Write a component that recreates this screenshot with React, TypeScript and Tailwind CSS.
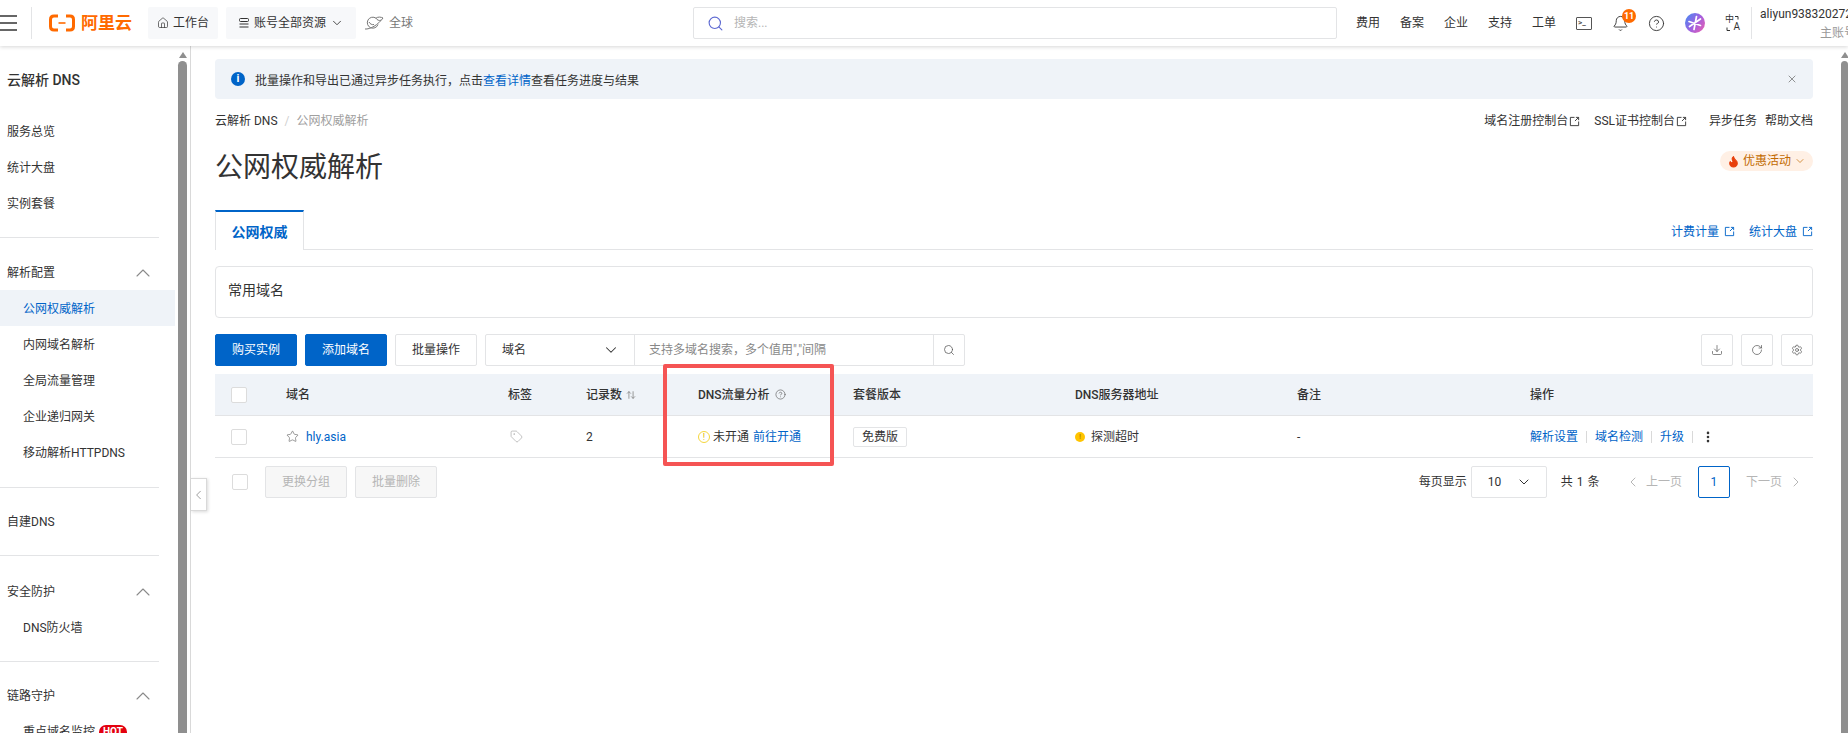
import {
  ChevronDown,
  ChevronLeft,
  ChevronRight,
  ChevronUp,
  CircleHelp,
  Download,
  Bell,
  Flame,
  House,
  Search,
  Settings,
  Star,
  Tag,
  X,
  RotateCw,
  EllipsisVertical,
  ArrowUpDown,
} from "lucide-react";

const font = "font-['Roboto','Noto_Sans_CJK_SC',sans-serif]";

function ExtIcon({ className = "" }: { className?: string }) {
  return (
    <svg viewBox="0 0 12 12" fill="none" stroke="currentColor" strokeWidth="1" className={`w-[11px] h-[11px] ${className}`}>
      <path d="M6 1.5H1.5v9h9V6" />
      <path d="M7.5 1.5h3v3M10.5 1.5 6.5 5.5" />
    </svg>
  );
}

function Logo() {
  return (
    <div className="flex items-center gap-[6px] text-[#ff6a00]">
      <svg viewBox="0 0 26 18" className="w-[26px] h-[18px]" fill="none" stroke="currentColor" strokeWidth="3">
        <path d="M9 2H5Q1.5 2 1.5 5.5v7Q1.5 16 5 16h4" />
        <path d="M17 2h4q3.500 0 3.500 3.500v7Q24.500 16 21 16h-4" />
        <path d="M9.500 9h7" strokeWidth="1.6" />
      </svg>
      <span className="text-[17px] font-bold leading-none">阿里云</span>
    </div>
  );
}

function SideRow({ label, sub, active, open, hot }: { label: string; sub?: boolean; active?: boolean; open?: boolean; hot?: boolean }) {
  return (
    <div
      className={`h-9 flex items-center shrink-0 ${sub ? "pl-[23px]" : "pl-[7px]"} ${sub || open ? "pt-px" : ""} ${active ? "bg-[#eff3f8] text-[#0064c8]" : "text-[#333]"}`}
    >
      <span>{label}</span>
      {hot && <span className="ml-1 h-[14px] px-[4px] rounded-full bg-[#e3000f] text-white text-[10px] font-bold leading-[14px]">HOT</span>}
      {open && <ChevronUp className="w-[24px] h-[24px] text-[#8a8a8a] ml-auto mr-[20px]" strokeWidth={1.1} />}
    </div>
  );
}

function Sidebar() {
  return (
    <div className="flex w-[191px] shrink-0 border-r border-[#d9d9d9] overflow-hidden">
      <aside className="w-[175px] shrink-0 text-[12px]">
        <div className="h-[68px] pl-[7px] pt-[23px] text-[14px] font-medium leading-[22px] text-[#333]">云解析 DNS</div>
        {["服务总览", "统计大盘", "实例套餐"].map((t) => (
          <SideRow key={t} label={t} />
        ))}
        <div className="h-px w-[159px] bg-[#e3e4e6] mt-[15px] mb-4" />
        <SideRow label="解析配置" open />
        <SideRow label="公网权威解析" sub active />
        {["内网域名解析", "全局流量管理", "企业递归网关", "移动解析HTTPDNS"].map((t) => (
          <SideRow key={t} label={t} sub />
        ))}
        <div className="h-px w-[159px] bg-[#e3e4e6] mt-[17px] mb-4" />
        <SideRow label="自建DNS" />
        <div className="h-px w-[159px] bg-[#e3e4e6] mt-[15px] mb-[17px]" />
        <SideRow label="安全防护" open />
        <SideRow label="DNS防火墙" sub />
        <div className="h-px w-[159px] bg-[#e3e4e6] mt-4 mb-[15px]" />
        <SideRow label="链路守护" open />
        <SideRow label="重点域名监控" sub hot />
      </aside>
      <Scrollbar className="w-[9px] ml-[3px]" />
    </div>
  );
}

function Scrollbar({ className = "" }: { className?: string }) {
  return (
    <div className={`flex flex-col items-center shrink-0 ${className}`}>
      <div className="mt-[6px] w-0 h-0 border-x-[4px] border-x-transparent border-b-[6px] border-b-[#8f8f8f]" />
      <div className="mt-[3px] flex-1 w-full rounded-t-full bg-[#8f8f8f]" />
    </div>
  );
}

function Btn({ children, primary, disabled, className = "" }: { children: React.ReactNode; primary?: boolean; disabled?: boolean; className?: string }) {
  const tone = primary
    ? "bg-[#0064c8] text-white border-[#0064c8]"
    : disabled
      ? "bg-[#f7f7f7] text-[#b5b5b5] border-[#e3e4e6]"
      : "bg-white text-[#333] border-[#e3e4e6]";
  return <div className={`w-[82px] h-8 flex items-center justify-center rounded-[2px] border shrink-0 ${tone} ${className}`}>{children}</div>;
}

function IconBtn({ children }: { children: React.ReactNode }) {
  return <div className="w-8 h-8 flex items-center justify-center rounded-[2px] border border-[#e3e4e6] text-[#555]">{children}</div>;
}

function Checkbox({ className = "" }: { className?: string }) {
  return <div className={`w-4 h-4 bg-white border border-[#dcdcdc] rounded-[2px] shrink-0 ${className}`} />;
}

function Table() {
  return (
    <div className="mt-2">
      <div className="h-[42px] flex items-center bg-[#eff3f8] border-b border-[#e3e4e6] font-medium text-[#333]">
        <div className="w-[71px] pl-4 shrink-0"><Checkbox /></div>
        <div className="w-[222px] shrink-0">域名</div>
        <div className="w-[78px] shrink-0">标签</div>
        <div className="w-[112px] shrink-0 flex items-center gap-1">
          记录数 <ArrowUpDown className="w-[10px] h-[10px] text-[#888]" />
        </div>
        <div className="w-[155px] shrink-0 flex items-center gap-[5px]">
          DNS流量分析 <CircleHelp className="w-[11px] h-[11px] text-[#666]" strokeWidth={1.5} />
        </div>
        <div className="w-[222px] shrink-0">套餐版本</div>
        <div className="w-[222px] shrink-0">DNS服务器地址</div>
        <div className="w-[233px] shrink-0">备注</div>
        <div>操作</div>
      </div>
      <div className="h-[42px] flex items-center border-b border-[#e3e4e6] text-[#333]">
        <div className="w-[71px] pl-4 shrink-0"><Checkbox /></div>
        <div className="w-[222px] shrink-0 flex items-center gap-[7px]">
          <Star className="w-[13px] h-[13px] text-[#666]" strokeWidth={1.2} />
          <span className="text-[#0064c8]">hly.asia</span>
        </div>
        <div className="w-[78px] shrink-0 pl-[2px]"><Tag className="w-[13px] h-[13px] text-[#aaa]" strokeWidth={1.3} /></div>
        <div className="w-[112px] shrink-0">2</div>
        <div className="w-[155px] shrink-0 flex items-center">
          <span className="w-3 h-3 rounded-full border border-[#f5d63d] text-[#e0b800] text-[9px] leading-[10px] text-center mr-[3px]">!</span>
          <span>未开通</span>
          <span className="ml-[4px] text-[#0064c8]">前往开通</span>
        </div>
        <div className="w-[222px] shrink-0">
          <span className="inline-block h-5 w-[54px] border border-[#e3e4e6] rounded-[2px] leading-[18px] text-center">免费版</span>
        </div>
        <div className="w-[222px] shrink-0 flex items-center gap-[6px]">
          <span className="w-[10px] h-[10px] rounded-full bg-[#ffc400] text-[8px] leading-[10px] text-center text-[#a06a00]">!</span>
          探测超时
        </div>
        <div className="w-[233px] shrink-0">-</div>
        <div className="flex items-center text-[#0064c8]">
          <span>解析设置</span>
          <span className="w-px h-[12px] bg-[#d9d9d9] mx-[8px]" />
          <span>域名检测</span>
          <span className="w-px h-[12px] bg-[#d9d9d9] mx-[8px]" />
          <span>升级</span>
          <span className="w-px h-[12px] bg-[#d9d9d9] mx-[8px]" />
          <EllipsisVertical className="w-[14px] h-[14px] text-[#333]" strokeWidth={2.5} />
        </div>
      </div>
    </div>
  );
}

function Bottom() {
  return (
    <div className="mt-2 flex items-center">
      <Checkbox className="ml-[17px]" />
      <Btn disabled className="ml-[17px]">更换分组</Btn>
      <Btn disabled className="ml-2">批量删除</Btn>
      <div className="ml-auto pr-[9px] flex items-center text-[#333]">
        <span>每页显示</span>
        <div className="ml-[4px] w-[76px] h-8 border border-[#e3e4e6] rounded-[2px] flex items-center pl-[16px] pr-[14px] justify-between">
          10 <ChevronDown className="w-[16px] h-[16px]" strokeWidth={1.5} />
        </div>
        <span className="ml-[14px] tracking-[0.5px]">共 1 条</span>
        <ChevronLeft className="ml-[25px] w-[16px] h-[16px] text-[#aaa]" strokeWidth={1.3} />
        <span className="ml-[5px] text-[#b5b5b5]">上一页</span>
        <div className="ml-4 w-8 h-8 border border-[#0064c8] rounded-[2px] text-[#0064c8] flex items-center justify-center">1</div>
        <span className="ml-4 text-[#b5b5b5]">下一页</span>
        <ChevronRight className="ml-[6px] w-[16px] h-[16px] text-[#aaa]" strokeWidth={1.3} />
      </div>
    </div>
  );
}

function TopBar() {
  return (
    <header className="h-[46px] shrink-0 relative z-10 bg-white shadow-[0_1px_4px_rgba(0,0,0,0.16)] flex items-center text-[12px] text-[#333]">
      <div className="w-[32px] h-[32px] border-r border-[#e3e4e6] shrink-0 flex flex-col justify-center gap-[5px] pr-[14px]">
        <div className="h-[2px] bg-[#666]" />
        <div className="h-[2px] bg-[#666]" />
        <div className="h-[2px] bg-[#666]" />
      </div>
      <div className="ml-[17px]"><Logo /></div>
      <div className="ml-[16px] w-[70px] h-8 bg-[#f7f8fa] rounded-[2px] flex items-center justify-center gap-[4px]">
        <House className="w-[12px] h-[12px]" strokeWidth={1.4} /> 工作台
      </div>
      <div className="ml-2 w-[130px] h-8 bg-[#f7f8fa] rounded-[2px] flex items-center justify-center gap-[4px]">
        <svg viewBox="0 0 12 12" className="w-[12px] h-[12px]" fill="none" stroke="currentColor" strokeWidth="1">
          <rect x="1.5" y="1.5" width="9" height="3" rx="1" />
          <path d="M1.5 7h9M1.5 10h9" />
        </svg>
        账号全部资源 <ChevronDown className="w-[14px] h-[14px]" strokeWidth={1.5} />
      </div>
      <div className="ml-2 flex items-center gap-[5px] text-[#777]">
        <svg viewBox="0 0 20 16" className="w-[20px] h-[16px]" fill="none" stroke="currentColor" strokeWidth="1">
          <path d="M12 3.200A5.500 5.500 0 1 0 14 9.500" />
          <path d="M1 14c5 .5 13-4 18-11-2-1-5-1.500-7 .2 1 1.800 3 2.800 5 2" />
          <path d="M5 7c1 2 3 3 5 2.500" />
        </svg>
        全球
      </div>
      <div className="ml-[280px] w-[644px] h-8 border border-[#e3e4e6] rounded-[2px] flex items-center pl-[13px] text-[#b5b5b5] gap-[10px]">
        <Search className="w-[17px] h-[17px] text-[#5e6ad2]" strokeWidth={1.6} /> 搜索...
      </div>
      <div className="ml-[19px] flex items-center gap-5">
        {["费用", "备案", "企业", "支持", "工单"].map((t) => (
          <span key={t}>{t}</span>
        ))}
      </div>
      <div className="ml-5 w-4 h-[13px] border-[1.5px] border-[#555] rounded-[1px] flex items-center pl-px text-[8px] leading-none font-bold text-[#555]">
        &gt;_
      </div>
      <div className="ml-5 relative">
        <Bell className="w-[17px] h-[17px]" strokeWidth={1.3} />
        <span className="absolute -top-[6px] left-[10px] w-[14px] h-[14px] rounded-full bg-[#ff6a00] text-white text-[9px] font-bold leading-[14px] text-center">11</span>
      </div>
      <CircleHelp className="ml-[19px] w-[17px] h-[17px]" strokeWidth={1.3} />
      <svg viewBox="0 0 20 20" className="ml-5 w-5 h-5">
        <defs>
          <linearGradient id="av" x1="0" y1="0.2" x2="1" y2="0.9">
            <stop offset="0" stopColor="#4f86f0" />
            <stop offset="0.5" stopColor="#a25fe0" />
            <stop offset="1" stopColor="#e860b0" />
          </linearGradient>
        </defs>
        <circle cx="10" cy="10" r="10" fill="url(#av)" />
        <path d="M11.500 3.500 9 16.500M4 8.500l11.500 4M4.500 13.500 15.500 6" stroke="#fff" strokeWidth="1.700" strokeLinecap="round" fill="none" />
      </svg>
      <div className="ml-5 relative w-[15px] h-[17px] text-[9px] leading-none">
        <span className="absolute left-0 top-0">中</span>
        <span className="absolute right-0 bottom-0 text-[10px]">A</span>
        <svg viewBox="0 0 15 17" className="absolute inset-0 w-[15px] h-[17px]" fill="none" stroke="currentColor" strokeWidth="1">
          <path d="M10 1.500h3v3M5 15.500H2v-3" />
        </svg>
      </div>
      <div className="ml-[11px] w-px h-8 bg-[#e3e4e6]" />
      <div className="ml-2 flex-1 min-w-0 overflow-hidden whitespace-nowrap">
        <div className="leading-[16px]">aliyun938320272</div>
        <div className="leading-[16px] mt-[3px] text-[#999] pl-[60px]">主账号</div>
      </div>
    </header>
  );
}

export default function App() {
  return (
    <div className={`h-[733px] w-[1848px] overflow-hidden flex flex-col bg-white ${font}`}>
      <TopBar />
      <div className="flex flex-1 min-h-0 relative">
        <Sidebar />
        <main className="flex-1 min-w-0 pl-6 pr-[28px] pt-[13px] text-[12px] text-[#333] relative">
          {/* 收起侧栏 */}
          <div className="absolute left-0 top-[432px] w-4 h-[33px] bg-white border border-l-0 border-[#d9d9d9] shadow-[1px_1px_3px_rgba(0,0,0,0.15)] flex items-center justify-center">
            <ChevronLeft className="w-[16px] h-[16px] text-[#888]" strokeWidth={1.3} />
          </div>
          <div className="h-10 bg-[#eff3f8] rounded-[4px] flex items-center pl-4 pr-[15px]">
            <span className="w-[14px] h-[14px] rounded-full bg-[#0064c8] text-white text-[11px] font-bold leading-[14px] text-center">i</span>
            <span className="ml-[10px] pt-[3px]">
              批量操作和导出已通过异步任务执行，点击<span className="text-[#0064c8]">查看详情</span>查看任务进度与结果
            </span>
            <X className="ml-auto w-[12px] h-[12px] text-[#666]" strokeWidth={1.4} />
          </div>
          <div className="mt-[11px] h-[22px] flex items-center">
            <span>云解析 DNS</span>
            <span className="mx-[7px] text-[#d0d0d0]">/</span>
            <span className="text-[#a0a0a0]">公网权威解析</span>
            <div className="ml-auto flex items-center">
              <span>域名注册控制台</span>
              <ExtIcon className="ml-[1px]" />
              <span className="ml-[14px]">SSL证书控制台</span>
              <ExtIcon className="ml-[1px]" />
              <span className="ml-[22px]">异步任务</span>
              <span className="ml-2">帮助文档</span>
            </div>
          </div>
          <div className="mt-[16px] h-10 flex items-start justify-between">
            <h1 className="text-[28px] leading-10 font-normal">公网权威解析</h1>
            <div className="mt-[3px] w-[93px] h-5 rounded-full bg-[#fff0e5] text-[#c26a00] flex items-center justify-center">
              <Flame className="w-[13px] h-[13px] text-[#e8400c] fill-[#e8400c]" />
              <span className="ml-[3px]">优惠活动</span>
              <ChevronDown className="ml-[3px] w-[12px] h-[12px]" strokeWidth={1.4} />
            </div>
          </div>
          <div className="mt-[22px] h-10 flex items-end border-b border-[#e3e4e6]">
            <div className="h-10 w-[89px] -mb-px pt-[2px] bg-white border-t-2 border-t-[#0064c8] border-x border-x-[#e3e4e6] flex items-center justify-center font-bold text-[14px] text-[#0064c8]">
              公网权威
            </div>
            <div className="ml-auto self-center flex items-center text-[#0064c8] pt-[4px]">
              <span>计费计量</span>
              <ExtIcon className="ml-[5px]" />
              <span className="ml-[14px]">统计大盘</span>
              <ExtIcon className="ml-[5px]" />
            </div>
          </div>
          <div className="mt-4 h-[52px] border border-[#e3e4e6] rounded-[4px] flex items-center pl-[12px] pb-[4px] text-[14px]">
            常用域名
          </div>
          <div className="mt-4 flex items-center">
            <Btn primary>购买实例</Btn>
            <Btn primary className="ml-2">添加域名</Btn>
            <Btn className="ml-2">批量操作</Btn>
            <div className="ml-2 h-8 flex border border-[#e3e4e6] rounded-[2px]">
              <div className="w-[149px] border-r border-[#e3e4e6] flex items-center justify-between pl-4 pr-[14px]">
                域名 <ChevronDown className="w-[18px] h-[18px]" strokeWidth={1.4} />
              </div>
              <div className="w-[298px] flex items-center pl-[14px] text-[#888]">支持多域名搜索，多个值用","间隔</div>
              <div className="w-[31px] border-l border-[#e3e4e6] flex items-center justify-center">
                <Search className="w-[12px] h-[12px] text-[#555]" strokeWidth={1.5} />
              </div>
            </div>
            <div className="ml-auto flex gap-2">
              <IconBtn><Download className="w-[12px] h-[12px]" strokeWidth={1.4} /></IconBtn>
              <IconBtn><RotateCw className="w-[12px] h-[12px]" strokeWidth={1.4} /></IconBtn>
              <IconBtn><Settings className="w-[12px] h-[12px]" strokeWidth={1.4} /></IconBtn>
            </div>
          </div>
          <Table />
          <Bottom />
          {/* 截图上的红框标注 */}
          <div className="absolute left-[472px] top-[318px] w-[171px] h-[102px] border-4 border-[#f55454] rounded-[2px]" />
        </main>
        <Scrollbar className="w-[7px]" />
      </div>
    </div>
  );
}
